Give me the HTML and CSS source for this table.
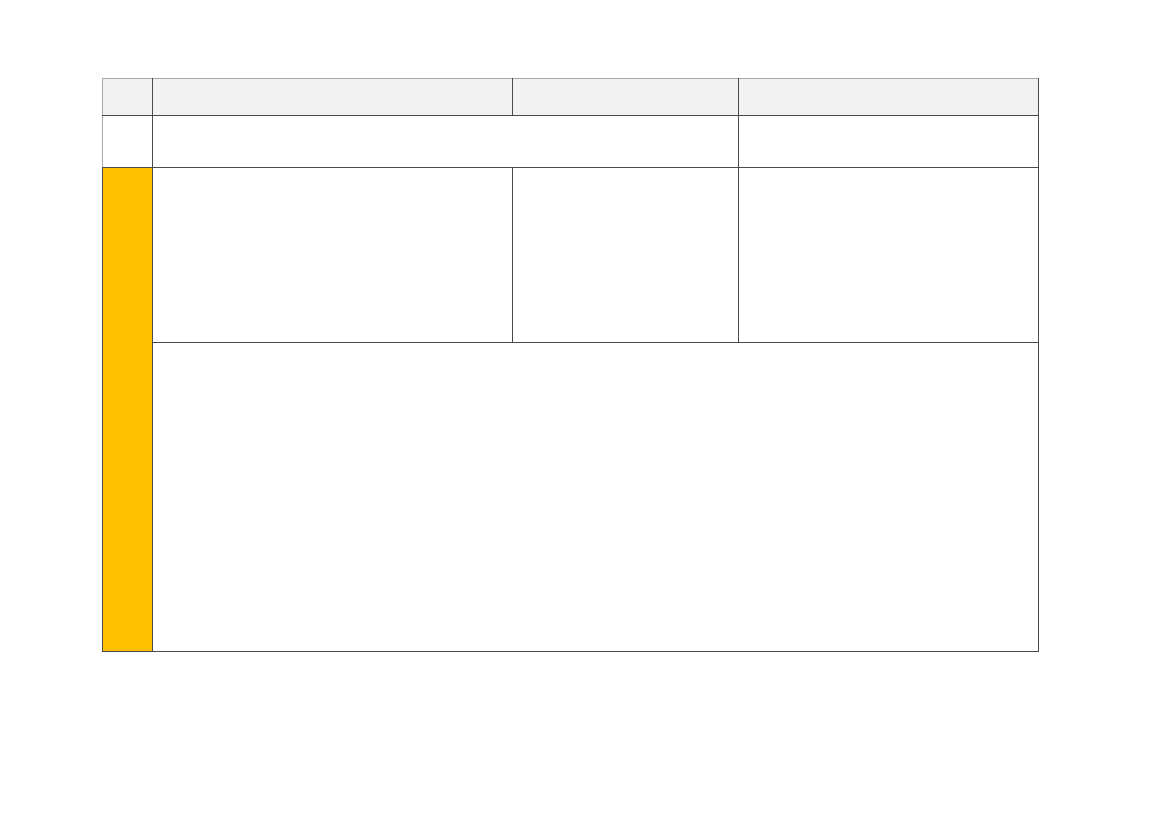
FILE: index.html
```html
<!DOCTYPE html>
<html lang="en">
<head>
  <meta charset="UTF-8" />
  <title>Table</title>
  <link rel="stylesheet" href="styles.css">
</head>
<body>
  <div class="page">
    <table class="grid">
      <colgroup>
        <col class="c-num">
        <col class="c-wide">
        <col class="c-mid">
        <col class="c-last">
      </colgroup>
      <tr class="head">
        <td></td>
        <td></td>
        <td></td>
        <td></td>
      </tr>
      <tr class="row-short">
        <td></td>
        <td colspan="2"></td>
        <td></td>
      </tr>
      <tr class="row-mid">
        <td class="mark" rowspan="2"></td>
        <td></td>
        <td></td>
        <td></td>
      </tr>
      <tr class="row-tall">
        <td colspan="3"></td>
      </tr>
    </table>
  </div>
</body>
</html>
```

FILE: styles.css
```css
* {
  margin: 0;
  padding: 0;
  box-sizing: border-box;
}

body {
  background: #fff;
  font-family: 'Liberation Sans', Arial, sans-serif;
}

.page {
  padding: 78px 0 0 102px;
}

.grid {
  border-collapse: collapse;
  table-layout: fixed;
  width: 936px;
}

.grid td {
  border: 1px solid #4a4a4a;
  padding: 0;
}

.c-num { width: 50px; }
.c-wide { width: 360px; }
.c-mid { width: 226px; }
.c-last { width: 300px; }

.head td {
  background: #f2f2f2;
  height: 37px;
  border-top-color: #a6a6a6;
}

.head td:first-child,
.row-short td:first-child,
.mark {
  border-left-color: #a6a6a6;
}

.row-short td { height: 52px; }
.row-mid td { height: 175px; }
.row-tall td { height: 309px; }

.mark {
  background: #ffc000;
}
```
